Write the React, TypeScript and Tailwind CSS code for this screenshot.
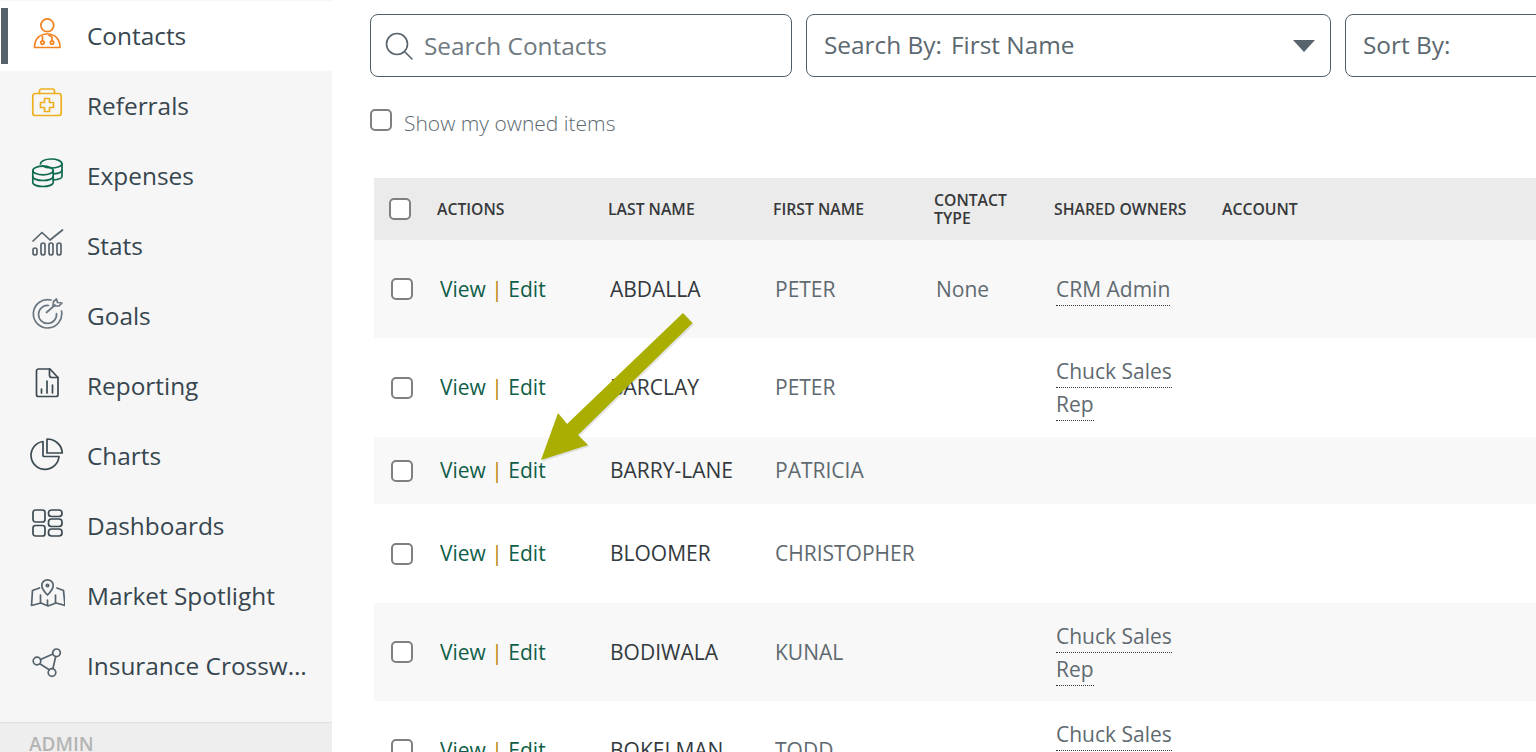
import React from "react";

const navItems = [
  { label: "Referrals", icon: "referrals" },
  { label: "Expenses", icon: "expenses" },
  { label: "Stats", icon: "stats" },
  { label: "Goals", icon: "goals" },
  { label: "Reporting", icon: "reporting" },
  { label: "Charts", icon: "charts" },
  { label: "Dashboards", icon: "dashboards" },
  { label: "Market Spotlight", icon: "market" },
  { label: "Insurance Crosswalk", icon: "crosswalk" },
];

const rows = [
  { last: "ABDALLA", first: "PETER", type: "None", owners: ["CRM Admin"], height: "h-[98px]", shaded: true },
  { last: "BARCLAY", first: "PETER", type: "", owners: ["Chuck Sales", "Rep"], height: "h-[99px]", shaded: false },
  { last: "BARRY-LANE", first: "PATRICIA", type: "", owners: [], height: "h-[67px]", shaded: true },
  { last: "BLOOMER", first: "CHRISTOPHER", type: "", owners: [], height: "h-[99px]", shaded: false },
  { last: "BODIWALA", first: "KUNAL", type: "", owners: ["Chuck Sales", "Rep"], height: "h-[98px]", shaded: true },
  { last: "BOKELMAN", first: "TODD", type: "", owners: ["Chuck Sales", "Rep"], height: "h-[98px]", shaded: false },
];

const NavIcon = ({ name }: { name: string }) => {
  const common = {
    width: 36,
    height: 36,
    viewBox: "0 0 36 36",
    fill: "none",
    strokeWidth: 1.7,
    strokeLinecap: "round" as const,
    strokeLinejoin: "round" as const,
    className: "shrink-0",
  };
  switch (name) {
    case "contacts":
      return (
        <svg {...common} stroke="#f58220">
          <circle cx="18.300" cy="7.300" r="6.400" />
          <path d="M5.500 29.500c0-9 5.500-13.500 12.800-13.500s12.700 4.500 12.700 13.500z" />
          <circle cx="13.500" cy="24.500" r="1.700" />
          <circle cx="23" cy="24.500" r="1.700" />
          <path d="M13.500 22.500v-4M23 22.500v-2.500a3 3 0 0 0-3-2.500" />
        </svg>
      );
    case "referrals":
      return (
        <svg {...common} stroke="#eeb01f">
          <rect x="3.800" y="5.500" width="28.400" height="22" rx="2.500" />
          <path d="M10.500 5.500V3a2 2 0 0 1 2-2h11a2 2 0 0 1 2 2v2.500" />
          <path d="M15.500 10.500h5v4h4v5h-4v4h-5v-4h-4v-5h4z" />
        </svg>
      );
    case "expenses":
      return (
        <svg {...common} stroke="#0f6a50">
          <ellipse cx="14" cy="12.500" rx="10.200" ry="4.300" />
          <path d="M3.800 12.500v12c0 2.300 4.500 4 10.200 4s10.200-1.700 10.200-4v-12" />
          <path d="M3.800 18.500c0 2.300 4.500 4 10.200 4s10.200-1.700 10.200-4" />
          <path d="M11.500 6c0-2.500 4.500-5 10.500-5s11 2 11 5v12.500c0 1.500-3.500 3-8.800 3.500" />
          <path d="M13 7.800c2 1 5 2.200 9 2.200 6 0 11-2 11-4M24.500 15.800c5-.3 8.500-1.500 8.500-3.800" />
        </svg>
      );
    case "stats":
      return (
        <svg {...common} stroke="#56636c">
          <path d="M4 13l9-8.500L21 12 33.500 2" />
          <rect x="4" y="20" width="4" height="7" rx="2" />
          <rect x="12" y="15" width="4" height="12" rx="2" />
          <rect x="20" y="15" width="4" height="12" rx="2" />
          <rect x="28" y="15" width="4" height="12" rx="2" />
        </svg>
      );
    case "goals":
      return (
        <svg {...common} stroke="#6a7680">
          <path d="M22 2A14.200 14.200 0 1 0 32.500 13" />
          <path d="M19.500 7.500A9 9 0 1 0 27.500 15.500" />
          <path d="M17.500 14.500L26 7" />
          <path d="M24 8l.5-4.500L27.500 1l1 3.500 4.500 .5-3 3z" />
        </svg>
      );
    case "reporting":
      return (
        <svg {...common} stroke="#3c4a52">
          <path d="M9.500 1h11.500l8 8.500V26.500a2 2 0 0 1-2 2H9.500a2 2 0 0 1-2-2V3a2 2 0 0 1 2-2z" />
          <path d="M20.500 1V7a2.500 2.500 0 0 0 2.500 2.500H29" />
          <path d="M12.500 25v-4M18 25V13M23.500 25v-8" />
        </svg>
      );
    case "charts":
      return (
        <svg {...common} stroke="#3c4a52">
          <path d="M14 3.500A14 14 0 1 0 30 18.500H15a1 1 0 0 1-1-1z" />
          <path d="M18 1c8 0 15 6 15.200 14H18z" />
        </svg>
      );
    case "dashboards":
      return (
        <svg {...common} stroke="#3c4a52">
          <rect x="4" y="2" width="12" height="12" rx="2.500" />
          <rect x="4" y="17.500" width="12" height="10.500" rx="2.500" />
          <rect x="19.500" y="2" width="13.500" height="6.500" rx="3" />
          <rect x="19.500" y="11" width="13.500" height="7.500" rx="3" />
          <rect x="19.500" y="21" width="13.500" height="7" rx="3" />
        </svg>
      );
    case "market":
      return (
        <svg {...common} stroke="#56636c">
          <path d="M18.500 17c-3.500-3.500-5.700-6-5.700-9.500a5.700 5.700 0 0 1 11.400 0c0 3.500-2.200 6-5.700 9.500z" />
          <circle cx="18.500" cy="7.500" r="1.200" />
          <path d="M10.500 10l-7 2.500-1 15 9.500-2.500 7 3 8-3 9 2.500-1.500-15-6.500-2.500" />
          <path d="M11.500 17v8M26.500 17v8M18.500 22v5" />
        </svg>
      );
    default:
      return (
        <svg {...common} stroke="#56636c">
          <circle cx="8" cy="13" r="3.800" />
          <circle cx="27.500" cy="4.800" r="3.800" />
          <circle cx="23" cy="24.500" r="3.800" />
          <path d="M11.500 11.500l12.500-5.500M10.800 15.800l9.500 6M26.700 8.500l-2.800 12.200" />
        </svg>
      );
  }
};

const Checkbox = () => (
  <span className="block h-[22px] w-[22px] shrink-0 rounded-[5px] border-2 border-[#808080] bg-white" />
);

const Caret = () => (
  <svg width="24" height="14" viewBox="0 0 24 14" className="shrink-0">
    <path d="M1 1h22L12 13z" fill="#56636c" />
  </svg>
);

const ActionLinks = () => (
  <span className="text-[#0f5e48]">
    View <span className="text-[#b8860b]">|</span> Edit
  </span>
);

const gridCols = "grid grid-cols-[63px_171px_165px_161px_120px_168px_1fr] items-center";

export default function App() {
  return (
    <div className="flex h-screen w-full overflow-hidden bg-white font-['Open_Sans',sans-serif]">
      {/* SIDEBAR */}
      <aside className="flex h-full w-[332px] shrink-0 flex-col bg-[#f6f6f6] text-[24.400px] text-[#37464f]">
        <div className="h-px shrink-0" />
        <div className="relative flex h-[70px] shrink-0 items-center gap-[22px] bg-white pl-[29px]">
          <span className="absolute left-px top-[7px] h-[56px] w-[7px] bg-[#56636c]" />
          <NavIcon name="contacts" />
          <span>Contacts</span>
        </div>
        {navItems.map((item) => (
          <div key={item.label} className="flex h-[70px] shrink-0 items-center gap-[22px] pl-[29px]">
            <NavIcon name={item.icon} />
            <span className="w-[222px] truncate">{item.label}</span>
          </div>
        ))}
        <div className="mt-[21px] flex-1 border-t border-[#dfdfdf] bg-[#eeeeee] pl-[29px] pt-[9px] text-[19px] font-semibold leading-6 text-[#b4b4b4]">
          ADMIN
        </div>
      </aside>

      {/* MAIN */}
      <main className="relative min-w-0 flex-1 pl-[38px] pt-[14px]">
        <div className="flex gap-[14px] text-[24.400px] text-[#5b6870]">
          <div className="flex h-[63px] w-[422px] shrink-0 items-center gap-[11px] rounded-[8px] border border-[#50606a] pl-[14px]">
            <svg width="28" height="28" viewBox="0 0 28 28" fill="none" stroke="#56636c" strokeWidth="1.600" strokeLinecap="round">
              <circle cx="12" cy="12" r="10.500" />
              <path d="M20 20l7 7" />
            </svg>
            <span className="pt-[2px] text-[#6f7a81]">Search Contacts</span>
          </div>
          <div className="flex h-[63px] w-[525px] shrink-0 items-center justify-between rounded-[8px] border border-[#50606a] pl-[17px] pr-[14px]">
            <span>
              Search By:<span className="ml-[9px]">First Name</span>
            </span>
            <Caret />
          </div>
          <div className="flex h-[63px] w-[400px] shrink-0 items-center rounded-[8px] border border-[#50606a] pl-[17px]">
            Sort By:
          </div>
        </div>

        <div className="mt-[32px] flex items-start gap-[12px]">
          <Checkbox />
          <span className="text-[21px] font-light leading-7 text-[#5b6870]">Show my owned items</span>
        </div>

        {/* TABLE */}
        <div className="ml-[4px] mt-[41px]">
          <div className={`${gridCols} h-[62px] bg-[#ebebeb] text-[15.750px] font-semibold leading-[18px] text-[#37393b]`}>
            <span className="pl-[15px]"><Checkbox /></span>
            <span>ACTIONS</span>
            <span>LAST NAME</span>
            <span>FIRST NAME</span>
            <span className="w-[90px]">CONTACT TYPE</span>
            <span>SHARED OWNERS</span>
            <span>ACCOUNT</span>
          </div>
          {rows.map((row) => (
            <div
              key={row.last}
              className={`${gridCols} ${row.height} ${row.shaded ? "bg-[#f8f8f8]" : "bg-white"} text-[21px] leading-[31px]`}
            >
              <span className="pl-[17px]"><Checkbox /></span>
              <span className="pl-[3px]"><ActionLinks /></span>
              <span className="pl-[2px] text-[#33393d]">{row.last}</span>
              <span className="pl-[2px] text-[#5f6a70]">{row.first}</span>
              <span className="pl-[2px] text-[#5f6a70]">{row.type}</span>
              <span className="flex flex-col items-start pl-[2px] pt-px text-[#5f6a70]">
                {row.owners.map((owner) => (
                  <span key={owner} className="border-b border-dotted border-[#37393b] leading-[32px]">
                    {owner}
                  </span>
                ))}
              </span>
              <span />
            </div>
          ))}
        </div>

        {/* annotation arrow */}
        <svg className="pointer-events-none absolute left-0 top-0" width="1204" height="752" viewBox="332 0 1204 752">
          <path d="M683 313L692.500 323L578 435L588 445L541 460L558 413L567 424Z" fill="#000" opacity="0.1" transform="translate(1.500 1.500)" />
          <path d="M683 313L692.500 323L578 435L588 445L541 460L558 413L567 424Z" fill="#a9ae00" />
        </svg>
      </main>
    </div>
  );
}
